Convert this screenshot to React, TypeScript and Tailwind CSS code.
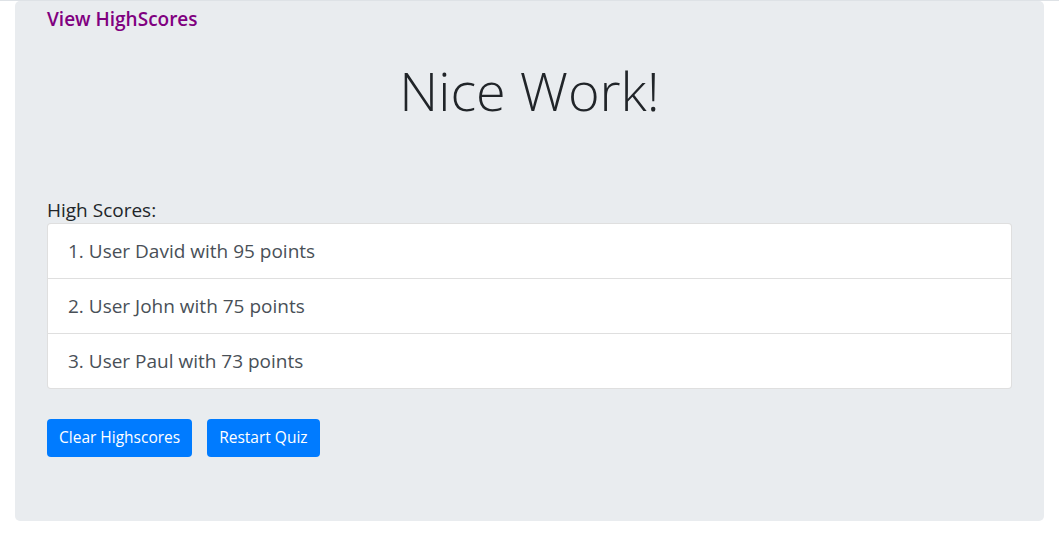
export default function App() {
  const scores = [
    "1. User David with 95 points",
    "2. User John with 75 points",
    "3. User Paul with 73 points",
  ];
  return (
    <div
      className="min-h-[538px] w-full bg-white border-t border-[#dee2e6]"
      style={{ fontFamily: '"Open Sans", "Noto Sans", sans-serif' }}
    >
      <div className="mx-[15px] h-[520px] rounded-[5px] bg-[#e9ecef] px-[32px] pt-[4px]">
        <a className="block text-[19px] leading-[28px] font-semibold text-[#800080]">View HighScores</a>
        <h1 className="mt-[24px] text-center text-[54px] leading-[67px] font-light text-[#212529]">
          Nice Work!
        </h1>
        <div className="mt-[74px] text-[19px] leading-[24px] text-[#212529]">High Scores:</div>
        <ul className="mt-[1px] rounded-[4px] border border-[rgba(0,0,0,0.125)] bg-white">
          {scores.map((s, i) => (
            <li
              key={i}
              className={`px-[20px] py-[12px] text-[19px] leading-[30px] text-[#495057] ${
                i > 0 ? "border-t border-[rgba(0,0,0,0.125)]" : ""
              }`}
            >
              {s}
            </li>
          ))}
        </ul>
        <div className="mt-[30px] flex gap-[15px]">
          <button className="h-[38px] rounded-[4px] bg-[#007bff] px-[12px] text-[15.5px] text-white">
            Clear Highscores
          </button>
          <button className="h-[38px] rounded-[4px] bg-[#007bff] px-[12px] text-[15.5px] text-white">
            Restart Quiz
          </button>
        </div>
      </div>
    </div>
  );
}
